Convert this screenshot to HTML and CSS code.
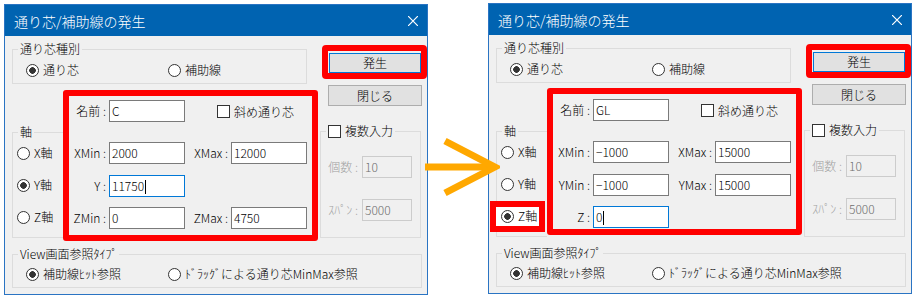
FILE: index.html
```html
<!DOCTYPE html>
<html lang="ja">

<head>
    <meta charset="UTF-8">
    <meta name="viewport" content="width=device-width, initial-scale=1.0">
    <title>通り芯/補助線の発生</title>
    <link rel="stylesheet" href="styles.css">
</head>

<body>
    <div class="stage">
        <!-- before -->
        <div class="dialog">
            <div class="titlebar">
                <span>通り芯/補助線の発生</span>
                <svg class="close" viewBox="0 0 10 10"><path d="M0 0L10 10M10 0L0 10" /></svg>
            </div>
            <div class="body">
                <div class="top">
                    <div class="left-col">
                        <div class="group kind">
                            <div class="group-title">通り芯種別</div>
                            <div class="radios">
                                <div class="radio wide on"><span class="dot"></span>通り芯</div>
                                <div class="radio"><span class="dot"></span>補助線</div>
                            </div>
                        </div>
                        <div class="middle">
                            <div class="group axis">
                                <div class="group-title">軸</div>
                                <div class="axis-list">
                                    <div class="radio"><span class="dot"></span>X軸</div>
                                    <div class="radio on"><span class="dot"></span>Y軸</div>
                                    <div class="radio"><span class="dot"></span>Z軸</div>
                                </div>
                            </div>
                            <div class="fields">
                                <span class="lbl">名前 :</span>
                                <span class="edit">C</span>
                                <div class="check slant"><span class="box"></span>斜め通り芯</div>

                                <span class="lbl">XMin :</span>
                                <span class="edit">2000</span>
                                <span class="lbl">XMax :</span>
                                <span class="edit">12000</span>

                                <span class="lbl">Y :</span>
                                <span class="edit focus">11750<i class="caret"></i></span>
                                <span></span>
                                <span></span>

                                <span class="lbl">ZMin :</span>
                                <span class="edit">0</span>
                                <span class="lbl">ZMax :</span>
                                <span class="edit">4750</span>
                            </div>
                        </div>
                    </div>
                    <div class="right-col">
                        <div class="mark-btn"><div class="btn default">発生</div></div>
                        <div class="btn plain">閉じる</div>
                        <div class="group multi">
                            <div class="group-title check"><span class="box"></span>複数入力</div>
                            <div class="multi-grid">
                                <span class="lbl dis">個数 :</span>
                                <span class="edit dis">10</span>
                                <span class="lbl dis">ｽﾊﾟﾝ :</span>
                                <span class="edit dis">5000</span>
                            </div>
                        </div>
                    </div>
                </div>
                <div class="group view">
                    <div class="group-title">View画面参照ﾀｲﾌﾟ</div>
                    <div class="radios">
                        <div class="radio wide on"><span class="dot"></span>補助線ﾋｯﾄ参照</div>
                        <div class="radio"><span class="dot"></span>ﾄﾞﾗｯｸﾞによる通り芯MinMax参照</div>
                    </div>
                </div>
            </div>
        </div>

        <!-- after -->
        <div class="dialog second">
            <div class="titlebar">
                <span>通り芯/補助線の発生</span>
                <svg class="close" viewBox="0 0 10 10"><path d="M0 0L10 10M10 0L0 10" /></svg>
            </div>
            <div class="body">
                <div class="top">
                    <div class="left-col">
                        <div class="group kind">
                            <div class="group-title">通り芯種別</div>
                            <div class="radios">
                                <div class="radio wide on"><span class="dot"></span>通り芯</div>
                                <div class="radio"><span class="dot"></span>補助線</div>
                            </div>
                        </div>
                        <div class="middle">
                            <div class="group axis">
                                <div class="group-title">軸</div>
                                <div class="axis-list">
                                    <div class="radio"><span class="dot"></span>X軸</div>
                                    <div class="radio"><span class="dot"></span>Y軸</div>
                                    <div class="radio on marked"><span class="dot"></span>Z軸</div>
                                </div>
                            </div>
                            <div class="fields tight">
                                <span class="lbl">名前 :</span>
                                <span class="edit">GL</span>
                                <div class="check slant"><span class="box"></span>斜め通り芯</div>

                                <span class="lbl">XMin :</span>
                                <span class="edit">−1000</span>
                                <span class="lbl">XMax :</span>
                                <span class="edit">15000</span>

                                <span class="lbl">YMin :</span>
                                <span class="edit">−1000</span>
                                <span class="lbl">YMax :</span>
                                <span class="edit">15000</span>

                                <span class="lbl">Z :</span>
                                <span class="edit focus">0<i class="caret"></i></span>
                            </div>
                        </div>
                    </div>
                    <div class="right-col">
                        <div class="mark-btn"><div class="btn default">発生</div></div>
                        <div class="btn plain">閉じる</div>
                        <div class="group multi">
                            <div class="group-title check"><span class="box"></span>複数入力</div>
                            <div class="multi-grid">
                                <span class="lbl dis">個数 :</span>
                                <span class="edit dis">10</span>
                                <span class="lbl dis">ｽﾊﾟﾝ :</span>
                                <span class="edit dis">5000</span>
                            </div>
                        </div>
                    </div>
                </div>
                <div class="group view">
                    <div class="group-title">View画面参照ﾀｲﾌﾟ</div>
                    <div class="radios">
                        <div class="radio wide on"><span class="dot"></span>補助線ﾋｯﾄ参照</div>
                        <div class="radio"><span class="dot"></span>ﾄﾞﾗｯｸﾞによる通り芯MinMax参照</div>
                    </div>
                </div>
            </div>
        </div>

        <svg class="arrow" viewBox="0 0 80 65">
            <path d="M5 32H73" />
            <path d="M25 6L75 32L25 58" />
        </svg>
    </div>
</body>

</html>
```

FILE: styles.css
```css
body {
    margin: 0;
    background-color: #fff;
    font-family: "Noto Sans CJK JP", sans-serif;
    font-size: 12px;
    font-weight: 300;
    color: #000;
}

.stage {
    position: relative;
    display: flex;
    align-items: flex-start;
    padding: 4px 0 0 4px;
}

.dialog {
    width: 424px;
    height: 291px;
    box-sizing: border-box;
    border: 1px solid #2a74c3;
    background-color: #f0f0f0;
}

.dialog.second {
    margin-left: 60px;
    margin-top: -1px;
}

.titlebar {
    height: 31px;
    display: flex;
    align-items: center;
    padding-left: 9px;
    background-color: #0063b1;
    color: #fff;
    font-size: 14px;
}

.close {
    width: 10px;
    height: 10px;
    margin-left: auto;
    margin-right: 9px;
    stroke: #fff;
    stroke-width: 1.2;
}

.body {
    padding-left: 7px;
}

.top {
    display: flex;
}

.left-col {
    width: 306px;
}

.right-col {
    width: 109px;
    display: flex;
    flex-direction: column;
    align-items: flex-start;
}

/* group boxes */
.group {
    box-sizing: border-box;
    border: 1px solid #dcdcdc;
}

.group-title {
    width: fit-content;
    height: 14px;
    margin: -8px 0 0 5px;
    padding: 0 2px;
    line-height: 14px;
    background-color: #f0f0f0;
}

.kind {
    width: 295px;
    height: 35px;
    margin-top: 13px;
}

.radios {
    display: flex;
    margin-top: 6px;
    padding-left: 13px;
}

.view .radios {
    margin-top: 5px;
}

.radio {
    display: flex;
    align-items: center;
    height: 16px;
    line-height: 16px;
    white-space: nowrap;
}

.radio.wide {
    width: 142px;
}

.dot {
    width: 13px;
    height: 13px;
    box-sizing: border-box;
    margin-right: 4px;
    border: 1px solid #333;
    border-radius: 50%;
    background-color: #fff;
}

.radio.on .dot {
    background: radial-gradient(circle, #333 0 3px, #fff 3.6px);
}

.middle {
    display: flex;
    align-items: flex-start;
    height: 151px;
    margin-top: 6px;
}

.axis {
    width: 51px;
    height: 106px;
    margin-top: 42px;
    border-right: none;
}

.axis-list {
    display: flex;
    flex-direction: column;
    gap: 16px;
    margin-top: 6px;
    padding-left: 4px;
}

.radio.marked {
    width: 55px;
    height: 31px;
    box-sizing: border-box;
    margin: -7px 0 -8px -11px;
    padding: 1px 0 2px 5px;
    border: 6px solid #f00;
    background-color: #fff;
}

/* red frame round the entry fields */
.fields {
    width: 255px;
    height: 151px;
    box-sizing: border-box;
    padding: 4px 5px 6px 0;
    border: 6px solid #f00;
    border-radius: 3px;
    display: grid;
    grid-template-columns: 38px 76px 42px 76px;
    grid-template-rows: 42px 33px 32px 22px;
    column-gap: 2px;
    align-items: start;
}

.fields.tight {
    height: 147px;
    margin-top: -1px;
    padding-top: 5px;
    padding-bottom: 1px;
}

.lbl {
    height: 22px;
    line-height: 22px;
    padding-right: 1px;
    text-align: right;
    white-space: nowrap;
}

.edit {
    height: 22px;
    box-sizing: border-box;
    padding-left: 2px;
    border: 1px solid #7a7a7a;
    background-color: #fff;
    line-height: 20px;
    white-space: nowrap;
}

.edit.focus {
    border-color: #0078d7;
}

.caret {
    display: inline-block;
    width: 1px;
    height: 14px;
    margin-left: 1px;
    vertical-align: -3px;
    background-color: #000;
}

.check {
    display: flex;
    align-items: center;
    height: 22px;
}

.check.slant {
    grid-column: 3 / span 2;
    padding-left: 30px;
}

.box {
    width: 13px;
    height: 13px;
    box-sizing: border-box;
    margin-right: 4px;
    border: 1px solid #333;
    background-color: #fff;
}

.group-title.check {
    height: 14px;
}

/* buttons */
.mark-btn {
    width: 105px;
    box-sizing: border-box;
    margin: 9px 0 0 4px;
    padding: 2px 0 0 1px;
    border: 6px solid #f00;
    border-radius: 4px;
}

.btn {
    height: 20px;
    box-sizing: border-box;
    border: 1px solid #adadad;
    background-color: #e1e1e1;
    line-height: 18px;
    text-align: center;
}

.btn.default {
    width: 92px;
    border-color: #0078d7;
}

.btn.plain {
    width: 94px;
    height: 21px;
    margin: 6px 0 0 10px;
    line-height: 19px;
}

.multi {
    width: 101px;
    height: 107px;
    margin: 25px 0 0 2px;
}

.multi-grid {
    display: grid;
    grid-template-columns: 38px 50px;
    column-gap: 3px;
    row-gap: 21px;
    margin-top: 18px;
}

.lbl.dis {
    color: #a0a0a0;
}

.edit.dis {
    border-color: #cccccc;
    background-color: #f0f0f0;
    color: #6d6d6d;
}

.view {
    width: 410px;
    height: 34px;
    margin-top: 13px;
}

.arrow {
    position: absolute;
    left: 420px;
    top: 135px;
    width: 80px;
    height: 65px;
    fill: none;
    stroke: #ffa800;
    stroke-width: 7;
}
```
